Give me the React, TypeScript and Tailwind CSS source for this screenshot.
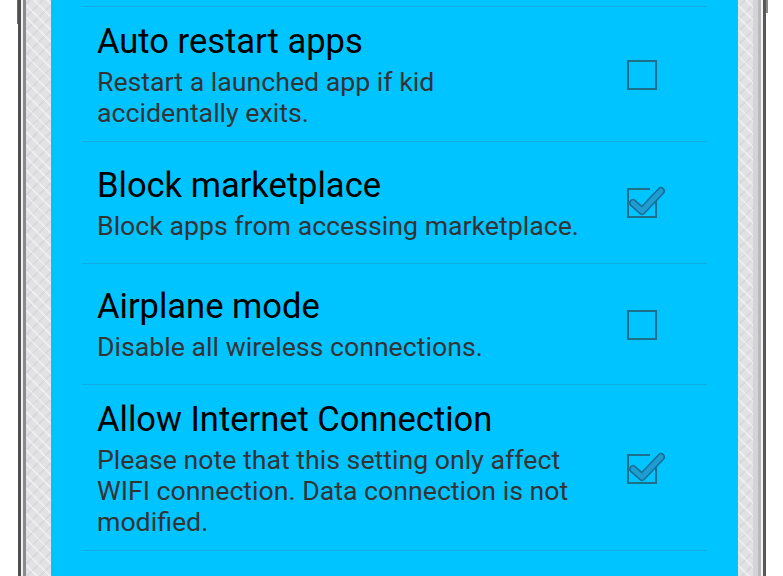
import React from "react";

type Pref = {
  title: string;
  summary: string;
  checked: boolean;
};

const prefs: Pref[] = [
  {
    title: "Auto restart apps",
    summary: "Restart a launched app if kid accidentally exits.",
    checked: false,
  },
  {
    title: "Block marketplace",
    summary: "Block apps from accessing marketplace.",
    checked: true,
  },
  {
    title: "Airplane mode",
    summary: "Disable all wireless connections.",
    checked: false,
  },
  {
    title: "Allow Internet Connection",
    summary:
      "Please note that this setting only affect WIFI connection. Data connection is not modified.",
    checked: true,
  },
];

function CheckBox({ checked }: { checked: boolean }) {
  return (
    <svg width="40" height="36" viewBox="0 0 40 36" className="block">
      {checked ? (
        <path d="M24 5 H2 V33 H30 V13" fill="none" stroke="#1d6f8b" strokeWidth="2" />
      ) : (
        <rect x="2" y="5" width="28" height="28" fill="none" stroke="#1d6f8b" strokeWidth="2" />
      )}
      {checked && (
        <>
          <path
            d="M7 19 L16 27 L35 7"
            fill="none"
            stroke="#156f96"
            strokeWidth="8"
            strokeLinecap="round"
            strokeLinejoin="round"
          />
          <path
            d="M7 19 L16 27 L35 7"
            fill="none"
            stroke="#1f9dd2"
            strokeWidth="5"
            strokeLinecap="round"
            strokeLinejoin="round"
          />
        </>
      )}
    </svg>
  );
}

function PrefRow({ pref }: { pref: Pref }) {
  return (
    <div className="flex items-center min-h-[121.5px] py-[12px] border-b border-[#10aede]">
      <div className="w-[485px] pl-[15px] box-content">
        <div className="text-[34.5px] leading-[44px] mb-[4px] text-black">{pref.title}</div>
        <div className="text-[26.7px] leading-[31px] text-[#333333]">{pref.summary}</div>
      </div>
      <div className="ml-auto mr-[41px]">
        <CheckBox checked={pref.checked} />
      </div>
    </div>
  );
}

const bezel =
  "bg-[#e2e2e4] bg-[image:repeating-linear-gradient(45deg,transparent_0_7px,rgba(255,255,255,0.4)_7px_9px),repeating-linear-gradient(-45deg,transparent_0_7px,rgba(200,200,204,0.35)_7px_9px)]";

export default function App() {
  return (
    <div
      className="flex h-[576px] w-[783px] overflow-hidden bg-white"
      style={{ fontFamily: "Roboto, 'Noto Sans', sans-serif" }}
    >
      {/* left edge of the phone */}
      <div className="w-[18px] flex flex-col items-end">
        <div className="w-[1px] h-[24px] bg-[#6b6b6b]" />
      </div>
      <div className="w-[3px] bg-[#4f4f4f]" />
      <div className="w-[2px] bg-[#f2f2f2]" />
      <div className="w-[3px] bg-[#8a8a8c]" />
      <div className={`w-[25px] ${bezel}`} />

      {/* screen */}
      <div className="w-[687px] bg-[#00c4ff] px-[31px]">
        <div className="h-[7px] border-b border-[#10aede]" />
        {prefs.map((p) => (
          <PrefRow key={p.title} pref={p} />
        ))}
      </div>

      {/* right edge of the phone */}
      <div className={`w-[20px] ${bezel} border-r-[5px] border-[#d4d4d7]`} />
      <div className="w-[3px] bg-[#b9b9bc]" />
      <div className="w-[2px] bg-[#f4f4f4]" />
      <div className="w-[3px] bg-[#585858]" />
      <div className="flex-1 flex flex-col">
        <div className="w-[2px] h-[13px] bg-[#8a8a8a]" />
      </div>
    </div>
  );
}
